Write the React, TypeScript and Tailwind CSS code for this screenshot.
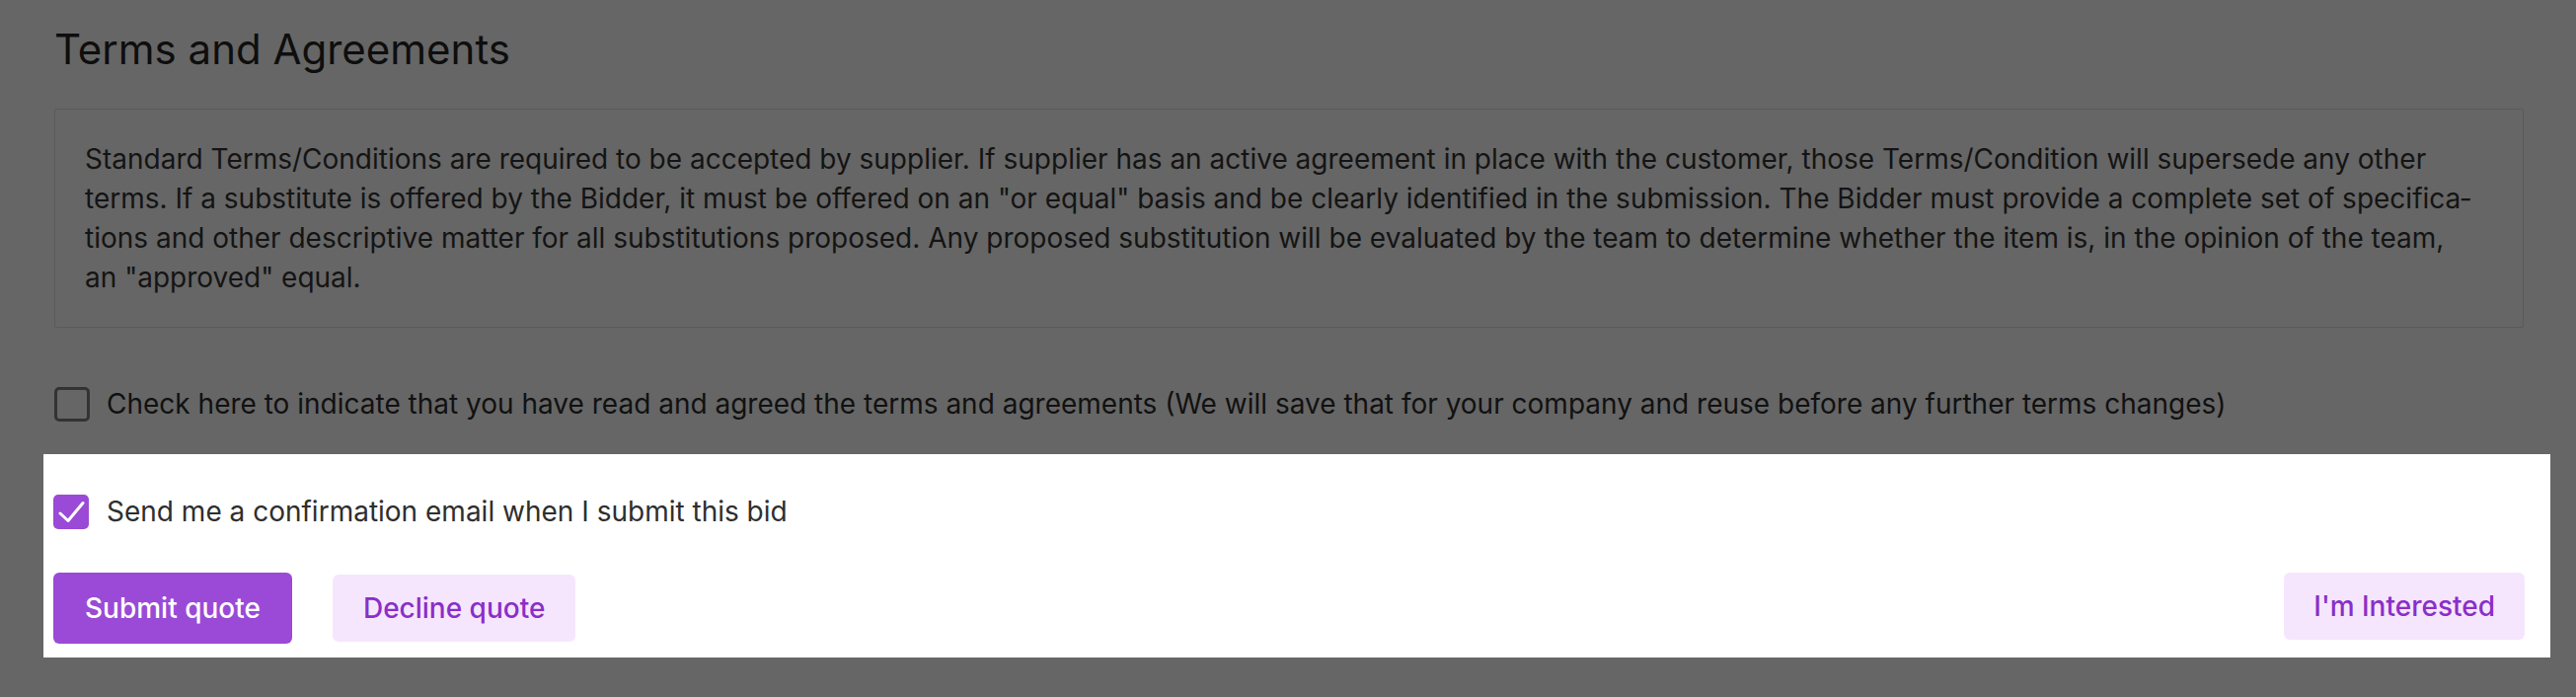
import React from "react";

export default function App() {
  const font = { fontFamily: "Inter, 'Noto Sans', sans-serif" };
  return (
    <div className="w-[2610px] h-[706px] bg-[#666666] overflow-hidden" style={font}>
      <div className="px-[55px] pt-[26px]">
        <h1 className="text-[42px] leading-[48px] font-normal text-[#0e0e0e]">Terms and Agreements</h1>
        <div className="mt-[36px] w-[2502px] border border-[#5a5a5a] rounded-[2px] pl-[30px] pr-[45px] py-[30px]">
          <p className="text-[28px] leading-[40px] text-[#141414]">
            Standard Terms/Conditions are required to be accepted by supplier. If supplier has an active agreement in place with the customer, those Terms/Condition will supersede any other terms. If a substitute is offered by the Bidder, it must be offered on an "or equal" basis and be clearly identified in the submission. The Bidder must provide a complete set of specifica{"\u00AD"}tions and other descriptive matter for all substitutions proposed. Any proposed substitution will be evaluated by the team to determine whether the item is, in the opinion of the team, an "approved" equal.
          </p>
        </div>
        <div className="mt-[57px] flex items-center gap-[17px]">
          <div className="w-[36px] h-[35px] rounded-[5px] border-[3px] border-[#333333] shrink-0" />
          <span className="text-[28px] leading-[40px] text-[#111111]">
            Check here to indicate that you have read and agreed the terms and agreements (We will save that for your company and reuse before any further terms changes)
          </span>
        </div>
      </div>
      <div className="mt-[31px] ml-[44px] w-[2540px] h-[206px] bg-white pl-[10px] pr-[26px] pt-[38px]">
        <div className="flex items-center gap-[18px]">
          <div className="w-[36px] h-[35px] rounded-[5px] bg-[#9a4ad6] flex items-center justify-center shrink-0">
            <svg width="36" height="35" viewBox="0 0 36 35" fill="none">
              <path d="M7 19 L15 26.5 L30 8.5" stroke="white" strokeWidth="3" strokeLinecap="round" strokeLinejoin="round" />
            </svg>
          </div>
          <span className="text-[28px] leading-[40px] text-[#2e2e2e]">Send me a confirmation email when I submit this bid</span>
        </div>
        <div className="mt-[42px] flex items-center h-[72px]">
          <button className="h-[72px] px-[32px] rounded-[6px] bg-[#9a4ad6] text-white text-[28px] font-medium">Submit quote</button>
          <button className="ml-[41px] h-[68px] px-[31px] rounded-[6px] bg-[#f6e6fd] text-[#8a2ec8] text-[28px] font-medium">Decline quote</button>
          <div className="flex-1" />
          <button className="self-start h-[68px] px-[30px] rounded-[6px] bg-[#f6e6fd] text-[#8a2ec8] text-[28px] font-medium">I'm Interested</button>
        </div>
      </div>
    </div>
  );
}
